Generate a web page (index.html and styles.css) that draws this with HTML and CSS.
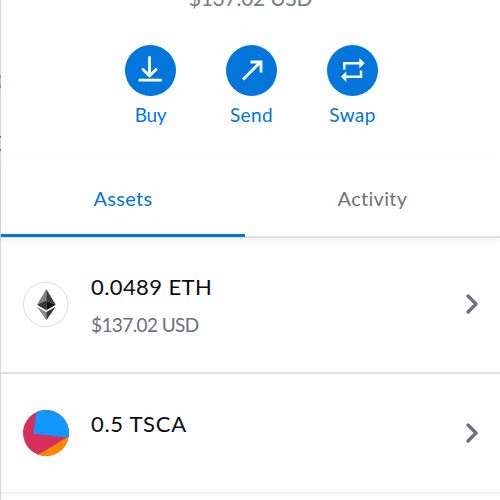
FILE: index.html
```html
<!DOCTYPE html>
<html lang="en">

<head>
    <meta charset="UTF-8">
    <meta name="viewport" content="width=device-width, initial-scale=1">
    <title>Wallet</title>
    <link rel="stylesheet" href="styles.css">
</head>

<body>
    <div class="wallet">
        <div class="balance"><span>$137.02 USD</span></div>
        <div class="actions">
            <div class="action">
                <svg class="circle" viewBox="0 0 51 51">
                    <path d="M24.5 12.5V30M18 24.5l6.5 6.3 6.5-6.3M14.7 35.2h21" stroke-linecap="round" />
                </svg>
                <span class="buy">Buy</span>
            </div>
            <div class="action">
                <svg class="circle" viewBox="0 0 51 51">
                    <path d="M17 34.5L34.5 17M24.5 17H35v10.5" />
                </svg>
                <span class="send">Send</span>
            </div>
            <div class="action">
                <svg class="circle" viewBox="0 0 51 51">
                    <path class="thin" d="M17.3 24.5v-6.3h16M34 25.5v6.3H18" />
                    <path class="head" d="M32.3 13l5.3 5.2-5.3 5.3zM19.3 26.5L14 31.8l5.3 5.2z" />
                </svg>
                <span class="swap">Swap</span>
            </div>
        </div>
        <ul class="tabs">
            <li class="active"><span>Assets</span></li>
            <li><span>Activity</span></li>
        </ul>
        <ul class="assets">
            <li>
                <svg class="icon" viewBox="0 0 46 46">
                    <circle cx="22.7" cy="23.4" r="22.2" fill="#fff" stroke="#dcdce0" />
                    <path d="M23.3 8L14 23.7l9.3-4.1z" fill="#828384" />
                    <path d="M23.3 8l9.4 15.7-9.4-4.1z" fill="#3c3c3d" />
                    <path d="M14 23.7l9.3-4.1v9.6z" fill="#343434" />
                    <path d="M32.7 23.7l-9.4-4.1v9.6z" fill="#141414" />
                    <path d="M14 25.7l9.3 5.3v8.2z" fill="#8c8c8c" />
                    <path d="M32.7 25.7l-9.4 5.3v8.2z" fill="#393939" />
                </svg>
                <div class="info">
                    <p class="amount eth">0.0489 ETH</p>
                    <p class="fiat">$137.02 USD</p>
                </div>
                <svg class="arrow" viewBox="0 0 12 20">
                    <path d="M2 2l8 8-8 8" />
                </svg>
            </li>
            <li>
                <svg class="icon round" viewBox="0 0 46 46">
                    <rect width="46" height="46" fill="#d62f5c" />
                    <path d="M13.5 0L10.5 23.5 46 28V0z" fill="#1098fc" />
                    <path d="M46 26.3L14 45.5V46h32z" fill="#fa8900" />
                </svg>
                <div class="info">
                    <p class="amount tsca">0.5 TSCA</p>
                </div>
                <svg class="arrow" viewBox="0 0 12 20">
                    <path d="M2 2l8 8-8 8" />
                </svg>
            </li>
        </ul>
    </div>
</body>

</html>
```
FILE: styles.css
```css
* {
    margin: 0;
    padding: 0;
    box-sizing: border-box;
}

ul {
    list-style: none;
}

body {
    background-color: #fefefe;
    font-family: Lato, "Open Sans", sans-serif;
    font-variant-ligatures: none;
    overflow: hidden;
}

/* left edge, with a bit of the page behind showing through */
.wallet {
    height: 500px;
    padding-left: 1px;
    background: linear-gradient(#d6d6d8 75px, #8d8d92 75px, #8d8d92 78px, #e8b27c 78px, #e8b27c 85px, #8d8d92 85px, #8d8d92 88px, #d6d6d8 88px, #d6d6d8 136px, #77777b 136px, #77777b 138px, #d6d6d8 138px, #d6d6d8 149px, #77777b 149px, #77777b 151px, #d6d6d8 151px) no-repeat 0 0 / 1px 100%;
    overflow: hidden;
}

.balance {
    height: 45px;
    line-height: 24px;
    margin-top: -14px;
    margin-bottom: 14px;
    text-align: center;
    font-size: 21px;
    letter-spacing: -0.25px;
    color: #777b85;
}

.actions {
    display: flex;
    justify-content: center;
    gap: 50px;
    height: 115px;
    padding-left: 2px;
}

.action {
    width: 51px;
    display: flex;
    flex-direction: column;
    align-items: center;
    color: #0376d8;
    font-size: 19px;
    line-height: 24px;
}

.action span {
    margin-top: 7px;
}

.action .buy {
    letter-spacing: -0.3px;
}

.action .send,
.action .swap {
    letter-spacing: 0.4px;
}

.circle {
    width: 51px;
    height: 51px;
    flex: none;
    border-radius: 50%;
    background-color: #0376dc;
}

.circle path {
    fill: none;
    stroke: #fff;
    stroke-width: 2.8;
}

.circle .thin {
    stroke-width: 2.4;
}

.circle .head {
    fill: #fff;
    stroke: none;
}

.tabs {
    display: flex;
    height: 78px;
    border-bottom: 2px solid #e0e1e4;
    box-shadow: 0 2px 4px rgba(60, 60, 90, .07);
}

.tabs li {
    flex: 1;
    height: 77px;
    padding-top: 26px;
    text-align: center;
    font-size: 20px;
    letter-spacing: 0.3px;
    line-height: 24px;
    color: #717276;
}

.tabs .active {
    flex: none;
    width: 244px;
    color: #0376d8;
    border-bottom: 3px solid #0376dc;
}

.assets li {
    display: flex;
    padding: 43px 22px 0;
    height: 136px;
    border-bottom: 2px solid #dfe0e2;
}

.assets li:last-child {
    height: 120px;
    padding-top: 36px;
    border-bottom-color: #eeeff1;
}

.icon {
    width: 46px;
    height: 46px;
    flex: none;
}

.round {
    border-radius: 50%;
}

.info {
    flex: 1;
    margin: -9px 0 0 22px;
}

.amount {
    font-size: 22px;
    line-height: 30px;
    color: #0b0c10;
}

.eth {
    letter-spacing: 0.4px;
}

.tsca {
    margin-top: 8px;
    letter-spacing: 0.7px;
}

.fiat {
    margin-top: 11px;
    font-size: 19px;
    letter-spacing: -0.6px;
    line-height: 24px;
    color: #6a707c;
}

.arrow {
    width: 12px;
    height: 20px;
    margin-top: 13px;
}

.arrow path {
    fill: none;
    stroke: #697080;
    stroke-width: 3.3;
    stroke-linecap: round;
    stroke-linejoin: round;
}
```
